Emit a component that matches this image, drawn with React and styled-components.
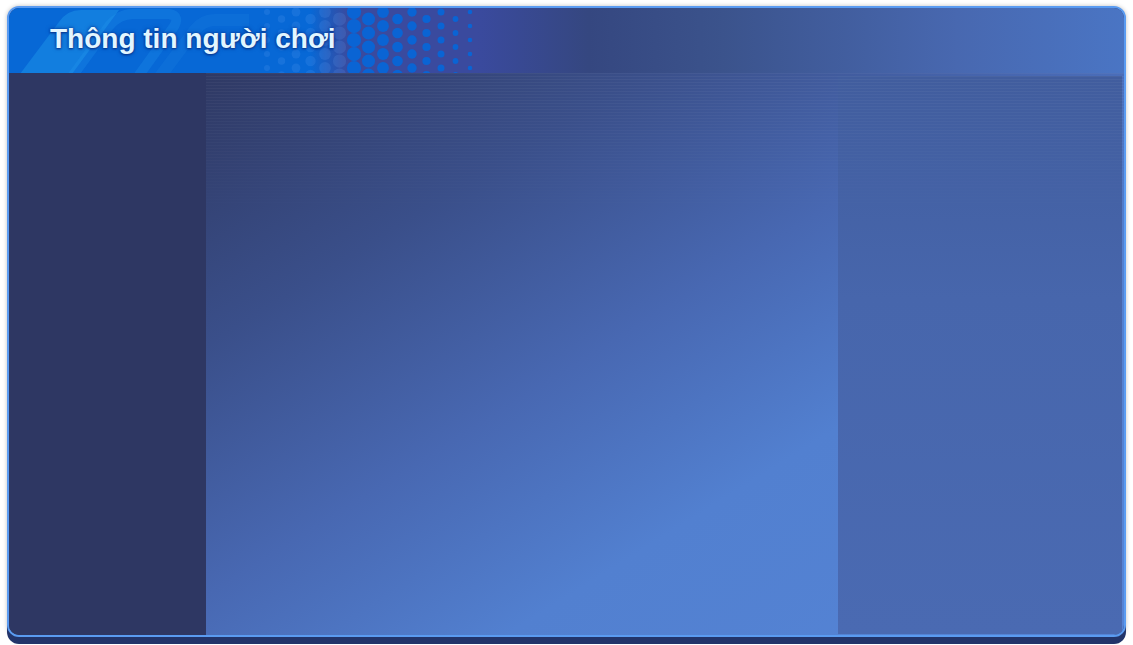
import styled, { createGlobalStyle } from "styled-components";

const GlobalStyle = createGlobalStyle`
  html, body {
    margin: 0;
    padding: 0;
    background: #ffffff;
  }
  body {
    font-family: "Liberation Sans", Arial, sans-serif;
  }
`;

const Page = styled.div`
  width: 1133px;
  height: 645px;
  padding: 6px 7px 0;
  box-sizing: border-box;
`;

const Card = styled.div`
  height: 631px;
  box-sizing: border-box;
  border: 2px solid #5a9bf1;
  border-radius: 12px;
  overflow: hidden;
  display: flex;
  flex-direction: column;
  background: #2e3763;
  box-shadow: 0 7px 0 #22346a, 0 0 4px rgba(0, 0, 0, 0.25);
`;

const Header = styled.header`
  position: relative;
  height: 65px;
  flex-shrink: 0;
  display: flex;
  align-items: center;
  padding: 0 0 3px 41px;
  box-sizing: border-box;
  overflow: hidden;
  background: linear-gradient(
    90deg,
    #0768d6 0%,
    #0768d6 27%,
    #3a4a9e 30.5%,
    #3a4a9e 42%,
    #354780 52%,
    #3b538c 64%,
    #4868b0 85%,
    #4a75c4 100%
  );
`;

const Decor = styled.svg`
  position: absolute;
  left: 0;
  top: 0;
  pointer-events: none;
`;

const Title = styled.h1`
  position: relative;
  margin: 0;
  font-family: "Liberation Sans", Arial, sans-serif;
  font-size: 28px;
  font-weight: 700;
  color: #e2f6ff;
  text-shadow: 0 0 2px #0a3f9c, 0 1px 2px #08368c, 0 0 4px rgba(8, 50, 140, 0.7);
`;

const Body = styled.div`
  flex: 1;
  display: flex;
  min-height: 0;
`;

const Sidebar = styled.aside`
  width: 197px;
  flex-shrink: 0;
  background: #2e3763;
`;

const Content = styled.main`
  position: relative;
  flex: 1;
  display: flex;
  background: linear-gradient(
    148deg,
    #2f3964 0%,
    #3a4f8a 24%,
    #4868b2 46%,
    #5280d0 66%,
    #5584d6 100%
  );

  &::before {
    content: "";
    position: absolute;
    inset: 0;
    pointer-events: none;
    background: repeating-linear-gradient(
      180deg,
      rgba(255, 255, 255, 0.045) 0 1px,
      transparent 1px 3px
    );
    -webkit-mask-image: linear-gradient(180deg, #000 0, transparent 150px);
    mask-image: linear-gradient(180deg, #000 0, transparent 150px);
  }
`;

const Center = styled.section`
  flex: 1;
`;

const SidePanel = styled.section`
  width: 284px;
  margin: 3px 2px 1px 0;
  background: linear-gradient(180deg, #415d9e 0%, #4766ac 40%, #4a6ab2 100%);
`;

function Dots() {
  const circles = [];
  for (let col = 0; col < 15; col++) {
    const x = 258 + col * 14.5;
    for (let row = 0; row < 6; row++) {
      const y = 4 + row * 14 + (col % 2 ? 7 : 0);
      const purple = x > 336;
      const r = purple ? 7.5 - (x - 336) / 24 : 3 + ((x - 258) / 80) * 4;
      if (r < 1.2) continue;
      circles.push(
        <circle
          key={`${col}-${row}`}
          cx={x}
          cy={y}
          r={r}
          fill={purple ? "#0a64d4" : "rgba(120,180,255,0.14)"}
        />
      );
    }
  }
  return circles;
}

function App() {
  return (
    <>
      <GlobalStyle />
      <Page>
        <Card>
          <Header>
            <Decor width="600" height="65" viewBox="0 0 600 65">
              <path
                d="M8 70 L50 14 Q58 2 72 2 L110 2 L60 70 Z"
                fill="rgba(40,170,240,0.35)"
              />
              <path
                d="M62 70 L100 18 Q110 6 124 6 L160 6 Q172 8 164 20 L128 70 Z"
                fill="none"
                stroke="rgba(40,160,240,0.22)"
                strokeWidth="10"
              />
              <path
                d="M150 70 L186 22 Q194 12 206 12 L240 12"
                fill="none"
                stroke="rgba(40,150,235,0.14)"
                strokeWidth="12"
              />
              <Dots />
            </Decor>
            <Title>Thông tin người chơi</Title>
          </Header>
          <Body>
            <Sidebar />
            <Content>
              <Center />
              <SidePanel />
            </Content>
          </Body>
        </Card>
      </Page>
    </>
  );
}

export default App;
